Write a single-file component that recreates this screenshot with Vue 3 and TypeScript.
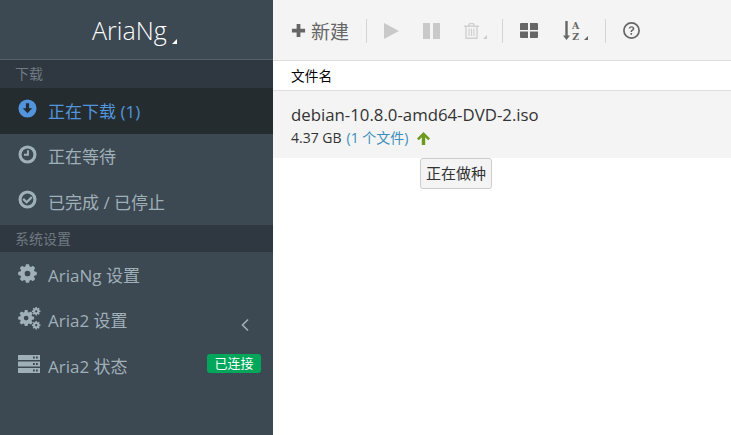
<template>
  <div class="wrapper">
    <aside class="sidebar">
      <div class="logo">
        <span>AriaNg</span>
        <i class="corner logo-corner"></i>
      </div>
      <div class="section-title">下载</div>
      <a
        v-for="item in taskItems"
        :key="item.label"
        class="menu-item"
        :class="{ active: item.active }"
      >
        <svg class="menu-icon" viewBox="0 0 20 20">
          <path v-for="d in item.paths" :key="d" :d="d" fill-rule="evenodd" />
        </svg>
        <span>{{ item.label }}</span>
      </a>
      <div class="section-title second">系统设置</div>
      <a class="menu-item">
        <svg class="menu-icon cog" viewBox="0 0 20 20">
          <path :d="gear(10, 10, 9.9, 7.6, 3)" fill-rule="evenodd" />
        </svg>
        <span>AriaNg 设置</span>
      </a>
      <a class="menu-item">
        <svg class="menu-icon wide" viewBox="0 0 24 24">
          <path :d="gear(8.5, 11.5, 8.4, 6.4, 2.5)" fill-rule="evenodd" />
          <path :d="gear(19, 4.5, 4.5, 3.3, 1.2)" fill-rule="evenodd" />
          <path :d="gear(19, 19, 4.5, 3.3, 1.2)" fill-rule="evenodd" />
        </svg>
        <span>Aria2 设置</span>
        <svg class="chevron" viewBox="0 0 10 14">
          <path d="M8 1.500 2.500 7 8 12.500" />
        </svg>
      </a>
      <a class="menu-item">
        <svg class="menu-icon wide server" viewBox="0 0 22 18">
          <path d="M0 0h22v5H0zM15 1.600v1.800h1.800V1.600zM18 1.600v1.800h1.800V1.600zM0 6.500h22v5H0zM15 8.100v1.800h1.800V8.100zM18 8.100v1.800h1.800V8.100zM0 13h22v5H0zM15 14.600v1.800h1.800v-1.800zM18 14.600v1.800h1.800v-1.800z" fill-rule="evenodd" />
        </svg>
        <span>Aria2 状态</span>
        <em class="badge">已连接</em>
      </a>
    </aside>

    <main class="content">
      <div class="toolbar">
        <button class="tool new-task">
          <svg class="plus" viewBox="0 0 16 16"><path d="M6 1h4v5h5v4h-5v5H6v-5H1V6h5z" /></svg>
          <span>新建</span>
        </button>
        <i class="divider"></i>
        <button class="tool disabled play">
          <svg width="15" height="16" viewBox="0 0 15 16"><path d="M0 0 15 8 0 16z" /></svg>
        </button>
        <button class="tool disabled pause">
          <svg width="17" height="16" viewBox="0 0 17 16"><path d="M0 0h7v16H0zM10 0h7v16h-7z" /></svg>
        </button>
        <button class="tool disabled trash">
          <svg width="15" height="18" viewBox="0 0 15 18">
            <path d="M5 1h5l1 2.500H15v1.400h-1.300V17H1.300V4.900H0V3.500h4zM6 2.200l-.4 1.300h3.800l-.4-1.300zM2.700 4.900v10.700h9.600V4.900zM4.500 6.500h1.200v7.500H4.500zM6.900 6.500h1.200v7.500H6.900zM9.300 6.500h1.200v7.500H9.300z" fill-rule="evenodd" />
          </svg>
          <i class="corner"></i>
        </button>
        <i class="divider wide-gap"></i>
        <button class="tool grid">
          <svg width="18" height="15" viewBox="0 0 18 15">
            <path d="M1 0h7v7H0V1a1 1 0 0 1 1-1zM10 0h7a1 1 0 0 1 1 1v6h-8zM0 8.500h8V15H1a1 1 0 0 1-1-1zM10 8.500h8V14a1 1 0 0 1-1 1h-7z" />
          </svg>
        </button>
        <button class="tool sort">
          <svg width="7" height="19" viewBox="0 0 7 19"><path d="M2.300 0h2.400v14.500H7L3.500 19 0 14.500h2.300z" /></svg>
          <span class="sort-letters"><b>A</b><b>Z</b></span>
          <i class="corner"></i>
        </button>
        <i class="divider"></i>
        <button class="tool help">
          <svg width="17" height="17" viewBox="0 0 17 17">
            <circle cx="8.500" cy="8.500" r="7.600" fill="none" stroke="currentColor" stroke-width="1.700" />
            <path d="M5.800 6.600c.2-1.500 1.300-2.300 2.800-2.300 1.600 0 2.700 1 2.700 2.300 0 1.100-.6 1.600-1.400 2.100-.6.400-.9.700-.9 1.400H7.500c0-1.200.4-1.800 1.200-2.300.6-.4 1-.7 1-1.200 0-.6-.5-1-1.200-1-.7 0-1.100.4-1.300 1zM7.500 11h1.600v1.700H7.500z" />
          </svg>
        </button>
      </div>

      <div class="table-head">文件名</div>
      <div class="task-row">
        <div class="task-name">debian-10.8.0-amd64-DVD-2.iso</div>
        <div class="task-info">
          <span>4.37 GB</span>
          <span class="file-count">(1 个文件)</span>
          <svg class="seed-arrow" width="13" height="13" viewBox="0 0 13 13">
            <path d="M6.500 0 13 6.500l-1.800 1.800-3-3V13H4.800V5.300l-3 3L0 6.500z" />
          </svg>
        </div>
        <div class="tooltip">正在做种</div>
      </div>
    </main>
  </div>
</template>

<script setup lang="ts">
interface TaskItem {
  label: string;
  active?: boolean;
  paths: string[];
}

const taskItems: TaskItem[] = [
  {
    label: "正在下载 (1)",
    active: true,
    paths: [
      "M10 .5a9.500 9.500 0 1 1 0 19 9.500 9.500 0 0 1 0-19zM8.300 4.500v5.300H5L10 15l5-5.200h-3.300V4.500z",
    ],
  },
  {
    label: "正在等待",
    paths: [
      "M10 .5a9.500 9.500 0 1 1 0 19 9.500 9.500 0 0 1 0-19zM10 3.800a6.200 6.200 0 1 0 0 12.400 6.200 6.200 0 0 0 0-12.400zM9.500 5.500h2v5.700H6.300V9.300h3.200z",
    ],
  },
  {
    label: "已完成 / 已停止",
    paths: [
      "M10 .5a9.500 9.500 0 1 1 0 19 9.500 9.500 0 0 1 0-19zM10 3.800a6.200 6.200 0 1 0 0 12.400 6.200 6.200 0 0 0 0-12.400zM13.700 6.700l1.700 1.700-6.300 6.200-4.500-4.400 1.700-1.700 2.800 2.700z",
    ],
  },
];

// eight-tooth cog with a hole in the middle
function gear(cx: number, cy: number, outer: number, inner: number, hole: number): string {
  const pts: string[] = [];
  const step = Math.PI / 4;
  for (let i = 0; i < 8; i++) {
    const a = i * step;
    const corners: [number, number][] = [
      [inner, a - 0.3],
      [outer, a - 0.17],
      [outer, a + 0.17],
      [inner, a + 0.3],
    ];
    for (const [r, t] of corners) {
      pts.push(`${(cx + r * Math.cos(t)).toFixed(2)} ${(cy + r * Math.sin(t)).toFixed(2)}`);
    }
  }
  const ring = `M${cx - hole} ${cy}a${hole} ${hole} 0 1 0 ${hole * 2} 0a${hole} ${hole} 0 1 0 ${-hole * 2} 0z`;
  return `M${pts.join("L")}z${ring}`;
}
</script>

<style>
html,
body {
  margin: 0;
  background: #fff;
}
</style>

<style scoped>
.wrapper {
  display: flex;
  width: 731px;
  height: 435px;
  overflow: hidden;
  font-family: "Open Sans", "Noto Sans CJK SC", sans-serif;
}

.sidebar {
  width: 273px;
  flex-shrink: 0;
  background: #3c4852;
  color: #a0b0b8;
}

.logo {
  position: relative;
  height: 59px;
  border-bottom: 1px solid #56626b;
  display: flex;
  align-items: center;
  color: #fff;
  font-size: 25px;
  font-weight: 300;
  padding-left: 92px;
}

.corner {
  position: absolute;
  width: 0;
  height: 0;
  border-style: solid;
  border-width: 0 0 5px 5px;
  border-color: transparent transparent #aaa transparent;
}

.logo-corner {
  left: 172px;
  top: 39px;
  border-bottom-color: #fff;
}

.section-title {
  height: 28px;
  line-height: 28px;
  padding-left: 15px;
  font-size: 14px;
  color: #6f7a82;
  background: #2f3740;
}

.section-title.second {
  height: 27.500px;
}

.menu-item {
  position: relative;
  display: flex;
  align-items: center;
  height: 45.500px;
  padding-left: 18px;
  font-size: 17px;
  box-sizing: border-box;
}

.menu-item span {
  position: absolute;
  left: 48px;
  margin-top: -1px;
}

.menu-item.active {
  background: #252c30;
  color: #5295dd;
}

.menu-icon {
  width: 19px;
  height: 19px;
  fill: currentColor;
  margin-top: -4px;
}

.menu-icon.cog {
  margin-top: -3px;
}

.menu-icon.wide {
  width: 23px;
  height: 23px;
}

.menu-icon.server {
  width: 22px;
  height: 18px;
}

.chevron {
  position: absolute;
  left: 240px;
  top: 20px;
  width: 10px;
  height: 14px;
  fill: none;
  stroke: #a0b0b8;
  stroke-width: 1.600;
}

.badge {
  position: absolute;
  left: 207px;
  top: 11px;
  width: 54px;
  height: 19px;
  line-height: 18px;
  text-align: center;
  border-radius: 3px;
  background: #00a65a;
  color: #fff;
  font-size: 13px;
  font-style: normal;
}

.content {
  flex: 1;
  min-width: 0;
  background: #fff;
}

.toolbar {
  display: flex;
  align-items: center;
  height: 61px;
  box-sizing: border-box;
  padding: 1px 0 0 18px;
  background: #f4f4f4;
  border-bottom: 1px solid #ddd;
}

.tool {
  position: relative;
  display: flex;
  align-items: center;
  border: 0;
  padding: 0;
  background: none;
  font: inherit;
  color: #666;
  fill: #666;
}

.tool.disabled {
  fill: #c9c9c9;
}

.play {
  margin-left: 17px;
}

.pause {
  margin-left: 24px;
}

.tool.trash {
  margin-left: 24px;
  fill: #d0d0d0;
}

.new-task {
  font-size: 19px;
  gap: 5px;
}

.plus {
  width: 15px;
  height: 15px;
}

.divider {
  width: 1px;
  height: 24px;
  background: #d5d5d5;
  margin-left: 17px;
}

.divider.wide-gap {
  margin-left: 23px;
}

.grid {
  margin-left: 17px;
}

.tool.trash .corner {
  left: 19px;
  top: 13px;
  border-width: 0 0 4px 4px;
  border-bottom-color: #ccc;
}

.sort {
  margin-left: 25px;
  gap: 2px;
  width: 25px;
}

.sort-letters {
  display: flex;
  flex-direction: column;
  font-family: "DejaVu Serif", serif;
  font-size: 9.400px;
  line-height: 11px;
}

.sort .corner {
  left: 21px;
  top: 16px;
  border-width: 0 0 4px 4px;
  border-bottom-color: #666;
}

.help {
  margin-left: 17px;
}

.table-head {
  height: 30px;
  line-height: 30px;
  box-sizing: border-box;
  padding-left: 18px;
  font-size: 13.700px;
  color: #000;
  border-bottom: 1px solid #ddd;
}

.task-row {
  position: relative;
  height: 67px;
  box-sizing: border-box;
  padding: 13px 18px 0;
  background: #f4f4f4;
  color: #333;
}

.task-name {
  font-size: 16.800px;
  line-height: 22px;
}

.task-info {
  display: flex;
  align-items: center;
  gap: 5px;
  margin-top: 2px;
  font-size: 14px;
  line-height: 20px;
}

.file-count {
  color: #3c8dbc;
}

.seed-arrow {
  margin-left: 4px;
  fill: #6c9a1f;
}

.tooltip {
  position: absolute;
  left: 147px;
  top: 67px;
  width: 72px;
  height: 31px;
  line-height: 29px;
  box-sizing: border-box;
  text-align: center;
  font-size: 15px;
  color: #333;
  background: #f4f4f4;
  border: 1px solid #ccc;
  border-radius: 3px;
}
</style>
